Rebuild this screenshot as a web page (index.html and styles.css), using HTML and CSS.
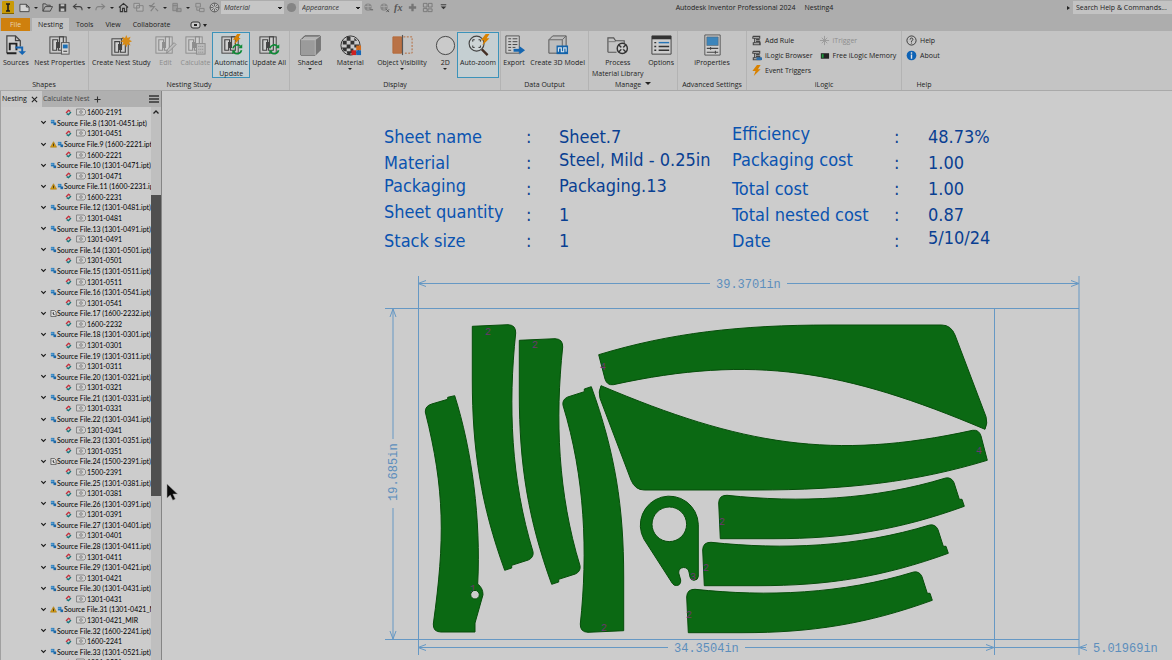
FILE: index.html
```html
<!doctype html>
<html lang="en">
<head>
    <meta charset="UTF-8">
    <meta name="viewport" content="width=device-width, initial-scale=1.0">
    <title>Autodesk Inventor Professional 2024 - Nesting4</title>
    <link rel="stylesheet" href="styles.css">
</head>
<body>
    <!-- Shared icon shapes -->
    <svg class="defs" aria-hidden="true">
        <symbol id="nest" viewBox="0 0 24 24">
            <rect x="2" y="3" width="17" height="17" fill="#c9c9c9" stroke="currentColor" stroke-width="1"/>
            <path d="M5 17V6h5v8h2V3h4v14h-5v-8H9v8z" fill="#d0d0d0" stroke="currentColor" stroke-width="1.2"/>
        </symbol>
        <symbol id="refresh" viewBox="0 0 12 12">
            <path d="M1.500 5A4.600 4.600 0 0 1 9.500 3M10.500 7A4.600 4.600 0 0 1 2.500 9" fill="none" stroke="#0c8a35" stroke-width="1.700"/>
            <path d="M11.200.8v4H7.200zM.8 11.200v-4h4z" fill="#0c8a35"/>
        </symbol>
        <symbol id="bolt" viewBox="0 0 10 12">
            <path d="M5.500 0h4L6.500 4.500h3L2 12l2-5.500H.5z" fill="#d98200"/>
        </symbol>
        <symbol id="scroll" viewBox="0 0 12 12">
            <path d="M2 1.500h7.500v2H4v5h6v2.200H2.500V8.500H4M2 1.500v2h2M5.500 5h4M5.500 7h4v3" fill="none" stroke="#444" stroke-width="1.200"/>
        </symbol>
        <symbol id="part" viewBox="0 0 8 8">
            <path d="M1 1h4v4H1z" fill="#2379bb"/><path d="M4 4h3v3H4z" fill="#1c67a6"/><path d="M1 2.500h3" stroke="#a9cbe5" stroke-width=".8"/>
        </symbol>
        <symbol id="sheetfile" viewBox="0 0 8 8">
            <path d="M1 .5h4l2 2v5H1z" fill="#ddd" stroke="#444" stroke-width=".8"/><path d="M2.500 3l3 3M4 2.500v3" stroke="#444"/>
        </symbol>
        <symbol id="warn" viewBox="0 0 8 8">
            <path d="M4 .8L7.500 7h-7z" fill="#d39b12" stroke="#a97500" stroke-width=".6"/><path d="M4 3v3" stroke="#222" stroke-width=".9"/>
        </symbol>
        <symbol id="link" viewBox="0 0 8 8">
            <path d="M1.200 4.500L4 1.500l2 1.200" fill="none" stroke="#c32f3c" stroke-width="1.600"/><path d="M6.800 3.500L4 6.500l-2-1.200" fill="none" stroke="#14757a" stroke-width="1.600"/>
        </symbol>
        <symbol id="shape" viewBox="0 0 10 8">
            <path d="M.5 1H8l1.500 1.500v3L8 7H.5z" fill="#d2d2d2" stroke="#777" stroke-width=".8"/><circle cx="5" cy="4" r="1.300" fill="none" stroke="#666" stroke-width=".7"/>
        </symbol>
        <symbol id="down" viewBox="0 0 8 8">
            <path d="M1.500 2.500L4 5l2.500-2.500" fill="none" stroke="#1c1c1c" stroke-width="1.400"/>
        </symbol>
    </svg>

    <header>
        <div class="titlebar">
            <svg class="app-logo" viewBox="0 0 12 13"><rect width="12" height="13" rx="1" fill="#c99a06"/><path d="M4 3h4M6 3v7M4 10h4" stroke="#1c1c1c" stroke-width="1.600"/><path d="M0 12.500h12" stroke="#806200"/></svg>
            <div class="quick">
                <button aria-label="New"><svg viewBox="0 0 12 12"><path d="M1 2.500h7l3 3v5H1zM8 2.500v3h3" fill="#d4d4d4" stroke="#444"/></svg></button>
                <span class="caret"></span>
                <button aria-label="Open"><svg viewBox="0 0 12 12"><path d="M1 10V2h3l1 1.500h4V5M1 10l2.500-5H11.500L9 10z" fill="none" stroke="#444"/></svg></button>
                <button aria-label="Save"><svg viewBox="0 0 12 12"><path d="M2 2h8v8.500H2z" fill="#444"/><path d="M4 2.500h4v2H4zM4 7h4v3H4z" fill="#c4c4c4"/></svg></button>
                <button aria-label="Undo"><svg viewBox="0 0 12 12"><path d="M5 2L1.500 5 5 8M2 5h6q3 0 3 4" fill="none" stroke="#444" stroke-width="1.200"/></svg></button>
                <span class="caret"></span>
                <button aria-label="Redo" class="off"><svg viewBox="0 0 12 12"><path d="M7 2l3.500 3L7 8M10 5H4q-3 0-3 4" fill="none" stroke="#777" stroke-width="1.200"/></svg></button>
                <span class="caret"></span>
                <button aria-label="Home"><svg viewBox="0 0 12 12"><path d="M1 6l5-4.500L11 6M2.500 5.500v5h2.500V7h2v3.500h2.500v-5" fill="none" stroke="#333" stroke-width="1.200"/></svg></button>
                <button aria-label="Team" class="off"><svg viewBox="0 0 12 12"><path d="M1 1.500h6v5H1zM4 4h7v6H4z" fill="#b8b8b8" stroke="#777"/></svg></button>
                <button aria-label="Select" class="off"><svg viewBox="0 0 12 12"><path d="M7 1L3 5h4L3 10M1 4h3M8 7l3 3" fill="none" stroke="#777" stroke-width="1.200"/></svg></button>
                <span class="caret"></span>
                <button aria-label="Update" class="off"><svg viewBox="0 0 12 12"><path d="M2 1.500h5v8H2zM2 4h5M6 7h5v3.500H6z" fill="#999" stroke="#777"/></svg></button>
                <span class="caret"></span>
                <button aria-label="Local update" class="off"><svg viewBox="0 0 12 12"><path d="M2 1.500h5v4H2zM6 7h5v3.500H6zM3 6v3h3" fill="none" stroke="#777"/></svg></button>
                <button aria-label="Appearance wheel"><svg viewBox="0 0 12 12"><circle cx="6" cy="6" r="4.800" fill="#bbb" stroke="#555"/><path d="M2.500 2.500l7 7M9.500 2.500l-7 7M6 1v10M1 6h10" stroke="#666"/><circle cx="6" cy="6" r="1.500" fill="#bbb"/></svg></button>
            </div>
            <select class="pick" aria-label="Material"><option>Material</option></select>
            <svg class="ball" viewBox="0 0 12 12"><circle cx="6" cy="6" r="5" fill="#858585"/></svg>
            <select class="pick" aria-label="Appearance"><option>Appearance</option></select>
            <div class="quick tail">
                <button aria-label="Adjust"><svg viewBox="0 0 12 12"><circle cx="5.500" cy="5.500" r="4" fill="#888"/><path d="M2 5h7M5.500 2v7" stroke="#aaa"/><path d="M8 8.500h3" stroke="#555"/></svg></button>
                <button aria-label="Clear"><svg viewBox="0 0 12 12"><circle cx="5.500" cy="5.500" r="4" fill="#888"/><path d="M2 5h7M5.500 2v7" stroke="#aaa"/><path d="M8 8l3 3M11 8l-3 3" stroke="#555"/></svg></button>
                <button class="fx">fx</button>
                <button aria-label="Add"><svg viewBox="0 0 12 12"><path d="M6 2v8M2 6h8" stroke="#757575" stroke-width="2.500"/></svg></button>
                <button aria-label="Grid"><svg viewBox="0 0 12 12"><path d="M1.500 1.500h4v4h-4zM7 1.500h4v4H7zM1.500 7h4v3.500h-4zM6.500 7.500H11v3H6.500z" fill="none" stroke="#777"/></svg></button>
                <button aria-label="Customize"><svg viewBox="0 0 12 12"><path d="M3 3h6" stroke="#333"/><path d="M3 5h6L6 8z" fill="#333"/></svg></button>
            </div>
            <div class="title"><span>Autodesk Inventor Professional 2024</span><span>Nesting4</span></div>
            <span class="caret side"></span>
            <input class="search" type="text" aria-label="Search" value="Search Help &amp; Commands...">
        </div>

        <nav>
            <a href="#" class="file">File</a>
            <a href="#" class="active">Nesting</a>
            <a href="#">Tools</a>
            <a href="#">View</a>
            <a href="#">Collaborate</a>
            <button class="pill" aria-label="Ribbon display"><svg viewBox="0 0 18 8"><rect x="1" y="1" width="9" height="6" rx="2" fill="#ccc" stroke="#333"/><path d="M4 4h3" stroke="#222" stroke-width="2"/><path d="M13 3h4l-2 3z" fill="#222"/></svg></button>
        </nav>

        <div class="ribbon">
            <section class="group shapes">
                <div class="tools">
                    <button class="tool"><svg viewBox="0 0 24 24"><path d="M3 20V2h9l5 5v6M12 2v5h5" fill="#cfcfcf" stroke="#444" stroke-width="1.300"/><path d="M3 20h10M6 17V10h7v7" fill="none" stroke="#222" stroke-width="2"/><path d="M12 14h7v6" fill="none" stroke="#1465b3" stroke-width="2"/><path d="M15 18h8l-4 4z" fill="#1465b3"/></svg><span>Sources</span></button>
                    <button class="tool"><svg viewBox="0 0 24 24"><use href="#nest"/><rect x="14" y="9" width="8" height="12" fill="#d5d5d5" stroke="#555"/><rect x="15.500" y="11" width="5" height="4" fill="#1c6fb5"/><path d="M16 18h4" stroke="#333"/></svg><span>Nest Properties</span></button>
                </div>
                <h2>Shapes</h2>
            </section>
            <section class="group study">
                <div class="tools">
                    <button class="tool"><svg viewBox="0 0 24 24"><g transform="translate(0 2)"><use href="#nest"/></g><path d="M17 1l1.300 3.200 3.200-1.400-1.400 3.200L23 7.500l-3 1.300 1.400 3.200-3.200-1.400L17 14l-1.300-3.400-3.200 1.400 1.400-3.200-3-1.300 3-1.500-1.400-3.200 3.200 1.400z" fill="#d68a16"/></svg><span>Create Nest Study</span></button>
                    <button class="tool" disabled><svg viewBox="0 0 24 24"><use href="#nest"/><path d="M13 20l1-4 7-7 2 2-7 7z" fill="#bbb" stroke="#8d8d8d"/></svg><span>Edit</span></button>
                    <button class="tool" disabled><svg viewBox="0 0 24 24"><use href="#nest"/><rect x="13" y="10" width="9" height="11" fill="#bbb" stroke="#8d8d8d"/><path d="M15 13h5M15 16h5M15 19h5" stroke="#8d8d8d" stroke-dasharray="1 1"/></svg><span>Calculate</span></button>
                    <button class="tool on"><svg viewBox="0 0 24 24"><use href="#nest"/><use href="#bolt" x="13" y="0" width="9" height="11"/><use href="#refresh" x="12" y="10" width="12" height="12"/></svg><span>Automatic Update</span></button>
                    <button class="tool"><svg viewBox="0 0 24 24"><use href="#nest"/><use href="#refresh" x="11" y="10" width="12" height="12"/></svg><span>Update All</span></button>
                </div>
                <h2>Nesting Study</h2>
            </section>
            <section class="group display">
                <div class="tools">
                    <button class="tool mid"><svg viewBox="0 0 24 24"><path d="M2 6l4-4h16v15l-5 5H2z" fill="#b5b5b5" stroke="#444"/><path d="M2 6h15v16H2z" fill="#9b9b9b"/><path d="M17 6l5-4v15l-5 5z" fill="#777"/><path d="M2 6h15M17 6v16M17 6l5-4" stroke="#c7c7c7" stroke-width=".7"/></svg><span>Shaded</span><i class="caret"></i></button>
                    <button class="tool mid"><svg viewBox="0 0 24 24"><circle cx="12" cy="12" r="10" fill="#c9c9c9" stroke="#333"/><path d="M8 2.500h4V7H8zM16 4l3 3h-3zM4 7h4v4H4zM12 7h4v4h-4zM8 11h4v4H8zM16 11h5v3h-5zM3 14h5v4H5zM12 15h3v5h-3zM8 18h4v4H9z" fill="#333"/><path d="M13 17h5v5h-5z" fill="#c22"/><path d="M18 12h5v5h-5z" fill="#d16b1c"/><path d="M18 17h5v5h-5z" fill="#1767b5"/></svg><span>Material</span><i class="caret"></i></button>
                    <button class="tool broad"><svg viewBox="0 0 24 24"><path d="M2 3h9v17H2z" fill="#b97246" stroke="#b56a3a"/><path d="M12 1v21" stroke="#555" stroke-width="1.200"/><path d="M13 3h9v17h-9" fill="none" stroke="#b56a3a" stroke-dasharray="2 1.500"/></svg><span>Object Visibility</span><i class="caret"></i></button>
                    <button class="tool slim"><svg viewBox="0 0 24 24"><circle cx="12" cy="12" r="9.500" fill="#cacaca" stroke="#444"/></svg><span>2D</span><i class="caret"></i></button>
                    <button class="tool on"><svg viewBox="0 0 24 24"><circle cx="10" cy="10" r="7.800" fill="#cdd4d6" stroke="#444" stroke-width="1.200"/><path d="M15.500 16l6 6" stroke="#442f25" stroke-width="2.500"/><path d="M6 8V6h2M12 6h2v2M6 12v2h2M12 14h2v-2" fill="none" stroke="#333"/><use href="#bolt" x="14" y="0" width="10" height="12"/></svg><span>Auto-zoom</span></button>
                </div>
                <h2>Display</h2>
            </section>
            <section class="group output">
                <div class="tools">
                    <button class="tool"><svg viewBox="0 0 24 24"><path d="M3 2h14v18H3z" fill="#ccc" stroke="#555"/><path d="M5.500 5h3M10 5h5M5.500 8h3M10 8h5M5.500 11h3M10 11h5M5.500 14h3M10 14h3M5.500 17h3" stroke="#444"/><path d="M11 17h7" stroke="#1666b0" stroke-width="3"/><path d="M17 12.500l6 4.500-6 4.500z" fill="#1666b0"/></svg><span>Export</span></button>
                    <button class="tool"><svg viewBox="0 0 24 24"><path d="M3 6l4-4h14v15l-4 3H3z" fill="#bdbdbd" stroke="#555"/><path d="M3 6h14v14M17 6l4-4" fill="none" stroke="#666"/><rect x="11" y="12" width="12" height="9" fill="#1363aa"/><path d="M13 18.500v-4h3v4h2.500v-4H21v4" fill="none" stroke="#d8e4ee" stroke-width="1.200"/></svg><span>Create 3D Model</span></button>
                </div>
                <h2>Data Output</h2>
            </section>
            <section class="group manage">
                <div class="tools">
                    <button class="tool"><svg viewBox="0 0 24 24"><path d="M2 19V4h6l2 3h9v4M2 19h9" fill="none" stroke="#555" stroke-width="1.200"/><path d="M2 8h8" stroke="#777"/><circle cx="17" cy="15" r="5.300" fill="#ccc" stroke="#333" stroke-width="1.500"/><path d="M13 11l8 8M21 11l-8 8" stroke="#333" stroke-width="1.500"/><circle cx="17" cy="15" r="1.500" fill="#ccc"/></svg><span>Process<br>Material Library</span></button>
                    <button class="tool"><svg viewBox="0 0 24 24"><path d="M2 2h20v19H2z" fill="#cdcdcd" stroke="#444"/><path d="M2 2h20v3.500H2z" fill="#333"/><path d="M9 9h11" stroke="#2674b5" stroke-width="1.500"/><path d="M4.500 9h2M4.500 13h2M4.500 17h2M9 13h11M9 17h11" stroke="#333" stroke-width="1.500"/></svg><span>Options</span></button>
                </div>
                <h2>Manage <i class="caret"></i></h2>
            </section>
            <section class="group settings">
                <div class="tools">
                    <button class="tool"><svg viewBox="0 0 24 24"><path d="M4 1h16v21H4z" fill="#cfcfcf" stroke="#555"/><path d="M6 3h12v9H6z" fill="#3c85bb" stroke="#555" stroke-width=".5"/><path d="M6 15h12M6 19h12M10 13.500v3M15 17.500v3" stroke="#444" stroke-width="1.100"/></svg><span>iProperties</span></button>
                </div>
                <h2>Advanced Settings</h2>
            </section>
            <section class="group ilogic">
                <div class="rows">
                    <button><svg viewBox="0 0 12 12"><use href="#scroll"/></svg>Add Rule</button>
                    <button disabled><svg viewBox="0 0 12 12"><path d="M6 1v10M1 6h10M3 3l6 6M9 3L3 9" stroke="#999"/></svg>iTrigger</button>
                    <button><svg viewBox="0 0 12 12"><use href="#scroll"/><path d="M6 8h6v3H6z" fill="#2d6ea8"/></svg>iLogic Browser</button>
                    <button><svg viewBox="0 0 12 12"><path d="M2 3.500h9v6H2z" fill="#222"/><path d="M3 4.500h2v4H3z" fill="#1c9a3c"/></svg>Free iLogic Memory</button>
                    <button><svg viewBox="0 0 12 12"><use href="#bolt" x="1" width="10" height="12"/></svg>Event Triggers</button>
                </div>
                <h2>iLogic</h2>
            </section>
            <section class="group help">
                <div class="rows">
                    <button><svg viewBox="0 0 12 12"><circle cx="6" cy="6" r="5" fill="none" stroke="#333"/><path d="M4.500 5q0-1.700 1.500-1.700T7.500 5Q7.500 5.800 6 6.500v1M6 8.300v1" fill="none" stroke="#333"/></svg>Help</button>
                    <button><svg viewBox="0 0 12 12"><circle cx="6" cy="6" r="5.300" fill="#0d62b5"/><path d="M6 5v4.500M6 2.500v1.500" stroke="#e4e4e4" stroke-width="1.500"/></svg>About</button>
                </div>
                <h2>Help</h2>
            </section>
        </div>
    </header>

    <main>
        <aside>
            <div class="panel-tabs">
                <a href="#" class="current">Nesting <svg viewBox="0 0 8 8"><path d="M1 1l6 6M7 1L1 7" stroke="#222" stroke-width="1.200"/></svg></a>
                <a href="#">Calculate Nest</a>
                <button aria-label="Add tab"><svg viewBox="0 0 8 8"><path d="M4 .5v7M.5 4h7" stroke="#333" stroke-width="1.200"/></svg></button>
                <button class="menu" aria-label="Panel menu"><svg viewBox="0 0 10 8"><path d="M0 1h10M0 4h10M0 7h10" stroke="#333" stroke-width="1.300"/></svg></button>
            </div>
            <div class="browser">
                <ul id="tree"></ul>
                <div class="scrollbar">
                    <svg viewBox="0 0 10 10"><path d="M2.500 6.500L5 4l2.500 2.500" fill="none" stroke="#222" stroke-width="1.300"/></svg>
                    <div class="thumb"></div>
                </div>
            </div>
        </aside>

        <div class="canvas">
            <div class="info">
                <dl>
                    <dt>Sheet name</dt><dd>:</dd><dd>Sheet.7</dd>
                    <dt>Material</dt><dd>:</dd><dd class="tailed">Steel, Mild - 0.25in</dd>
                    <dt class="tailed">Packaging</dt><dd>:</dd><dd class="tailed">Packaging.13</dd>
                    <dt class="tailed">Sheet quantity</dt><dd>:</dd><dd>1</dd>
                    <dt>Stack size</dt><dd>:</dd><dd>1</dd>
                </dl>
                <dl class="costs">
                    <dt class="tailed">Efficiency</dt><dd>:</dd><dd>48.73%</dd>
                    <dt class="tailed">Packaging cost</dt><dd>:</dd><dd>1.00</dd>
                    <dt>Total cost</dt><dd>:</dd><dd>1.00</dd>
                    <dt>Total nested cost</dt><dd>:</dd><dd>0.87</dd>
                    <dt>Date</dt><dd>:</dd><dd class="tailed">5/10/24</dd>
                </dl>
            </div>

            <svg class="drawing" viewBox="384 270 788 390">
                <defs>
                    <path id="bracket" d="M472.300 326.300L508 324.700Q516 325 515.700 333C508 405 511 480 533 551.700Q534 557.500 528.300 560L511.700 565.300V568L504.700 570.300C481 505 472.300 450 472.300 380z"/>
                    <path id="fender" d="M598.700 354.700C670 333 740 325 830 325H941.700Q951 325 955 335L986 416.700Q988 423 985 429.300C845 370 753 354 613.300 384.700Q607 385.500 605 379z"/>
                    <path id="arrow" d="M0 0l8-3M0 0l8 3"/>
                </defs>
                <!-- Sheet outline and dimensions -->
                <g class="lines">
                    <path d="M385 308.500H1079M385 639.500H1079M418.500 276V655M994.500 308.500V655M1079 276V655"/>
                    <path d="M418 283.500H710M787 283.500H1079M393 309V439M393 508V639M418 647.500H668M745 647.500H1086"/>
                    <use href="#arrow" transform="translate(418 283.500)"/>
                    <use href="#arrow" transform="translate(1079 283.500) rotate(180)"/>
                    <use href="#arrow" transform="translate(393 309) rotate(90)"/>
                    <use href="#arrow" transform="translate(393 639) rotate(-90)"/>
                    <use href="#arrow" transform="translate(418 647.500)"/>
                    <use href="#arrow" transform="translate(994 647.500) rotate(180)"/>
                    <use href="#arrow" transform="translate(1079 647.500)"/>
                </g>
                <g class="dims">
                    <text x="716" y="288">39.3701in</text>
                    <text x="674" y="652">34.3504in</text>
                    <text x="1093" y="652">5.01969in</text>
                    <text transform="translate(397 501) rotate(-90)">19.685in</text>
                </g>
                <!-- Nested parts -->
                <g class="parts">
                    <path d="M425.300 412Q425 406 431.700 404L447.700 399.300V397.300L454.700 395.700C472 450 481 520 477.700 584Q483 588 483 594.700L475 623V632H441Q433 632 433.300 624C445 540 445 490 425.300 412z"/>
                    <use href="#bracket"/>
                    <use href="#bracket" transform="translate(47 14)"/>
                    <use href="#bracket" transform="translate(1096 957) rotate(180)"/>
                    <use href="#bracket" transform="translate(394 1011) rotate(-90)"/>
                    <use href="#bracket" transform="translate(378 1058) rotate(-90)"/>
                    <use href="#bracket" transform="translate(362 1105) rotate(-90)"/>
                    <use href="#fender"/>
                    <use href="#fender" transform="translate(1586 815) rotate(180)"/>
                    <path fill-rule="evenodd" d="M698.300 524.300V576.500Q698 580 694 580.300Q691 580.500 690 577L689 572Q688 567.500 683.500 567.500Q678.500 568 678.700 573L680.700 580Q681 585 676.700 585.500Q674 586 672.300 583.300L644 539.300A29 29 0 1 1 698.300 524.300zM686.600 524.300A17.300 17.300 0 1 0 652 524.300A17.300 17.300 0 1 0 686.600 524.300z"/>
                </g>
                <g class="marks">
                    <text x="485" y="335">2</text>
                    <text x="532" y="348">2</text>
                    <text x="601" y="631">2</text>
                    <text x="600" y="370">4</text>
                    <text x="976" y="454">4</text>
                    <text x="470" y="592">1</text>
                    <text x="719" y="525">2</text>
                    <text x="703" y="571">2</text>
                    <text x="686" y="618">2</text>
                    <text x="690" y="580">3</text>
                </g>
                <circle class="hole" cx="475" cy="594.700" r="4.300"/>
            </svg>
        </div>
    </main>

    <svg class="pointer" viewBox="0 0 12 18"><path d="M1 1v14l3.300-3 2.500 5.200 2.500-1.200-2.400-5H11.500z" fill="#0a0a0a" stroke="#999" stroke-width=".5"/></svg>

    <script>
        // number, part, marker in front of the name
        var sources = [
            [8, '1301-0451'], [9, '1600-2221', 'warn'], [10, '1301-0471'], [11, '1600-2231', 'warn'],
            [12, '1301-0481'], [13, '1301-0491'], [14, '1301-0501'], [15, '1301-0511'],
            [16, '1301-0541'], [17, '1600-2232', 'sheetfile'], [18, '1301-0301'], [19, '1301-0311'],
            [20, '1301-0321'], [21, '1301-0331'], [22, '1301-0341'], [23, '1301-0351'],
            [24, '1500-2391', 'sheetfile'], [25, '1301-0381'], [26, '1301-0391'], [27, '1301-0401'],
            [28, '1301-0411'], [29, '1301-0421'], [30, '1301-0431'], [31, '1301-0421_MIR', 'warn'],
            [32, '1600-2241'], [33, '1301-0521']
        ];

        function icon(name) {
            return '<svg class="' + name + '"><use href="#' + name + '"/></svg>';
        }

        function shapeRow(part) {
            return '<li class="leaf">' + icon('link') + icon('shape') + part + '</li>';
        }

        var html = shapeRow('1600-2191');
        sources.forEach(function(s) {
            var marks = s[2] === 'warn' ? icon('warn') + icon('part') : icon(s[2] || 'part');
            html += '<li>' + icon('down') + marks + 'Source File.' + s[0] + ' (' + s[1] + '.ipt)</li>';
            html += shapeRow(s[1]);
        });
        document.getElementById('tree').innerHTML = html;
    </script>
</body>
</html>
```

FILE: styles.css
```css
* {
    margin: 0;
    padding: 0;
    box-sizing: border-box;
}

body {
    font-family: "Open Sans", "Noto Sans", sans-serif;
    font-size: 7px;
    line-height: 11px;
    color: #1c1c1c;
    background-color: #cccccc;
    height: 100vh;
    display: flex;
    flex-direction: column;
    overflow: hidden;
}

button {
    font: inherit;
    color: inherit;
    background: none;
    border: none;
}

a {
    color: inherit;
    text-decoration: none;
}

svg {
    display: block;
    flex: none;
}

.defs {
    width: 0;
    height: 0;
    position: absolute;
}

.caret {
    display: inline-block;
    border: 2px solid transparent;
    border-top-color: #222;
    border-bottom: none;
}

.caret.side {
    border: 2px solid transparent;
    border-left: 3px solid #222;
    border-right: none;
}

/* Title bar */
header {
    flex: none;
    background-color: #adadad;
}

.titlebar {
    display: flex;
    align-items: center;
    height: 15px;
    padding-left: 2px;
}

.app-logo {
    width: 12px;
    height: 13px;
    margin-right: 5px;
}

.quick {
    display: flex;
    align-items: center;
    flex: none;
    width: 201px;
    justify-content: space-between;
    margin-right: 1px;
}

.quick svg {
    width: 11px;
    height: 11px;
}

.off {
    opacity: 0.8;
}

.pick {
    appearance: none;
    width: 63px;
    height: 13px;
    border: none;
    border-radius: 0;
    padding-left: 3px;
    font: italic 7px/13px "Open Sans", "Noto Sans", sans-serif;
    color: #333;
    background: linear-gradient(#222, #222) no-repeat 57px 6px / 4px 1px, linear-gradient(#222, #222) no-repeat 58px 7px / 2px 1px, #c6c6c6;
}

.ball {
    width: 11px;
    height: 11px;
    margin: 0 2px;
}

.quick.tail {
    width: 86px;
    margin-left: 1px;
}

.fx {
    font: italic bold 10px/11px "Liberation Serif", serif;
    color: #555;
}

.title {
    flex: 1;
    display: flex;
    justify-content: center;
    gap: 9px;
    padding-right: 8px;
}

.search {
    width: 99px;
    height: 13px;
    margin-left: 3px;
    padding-left: 3px;
    border: none;
    font: inherit;
    color: #222;
    background-color: #c3c3c3;
}

/* Ribbon tabs */
nav {
    display: flex;
    align-items: center;
    height: 16px;
    padding: 3px 0 0 1px;
}

nav a {
    padding: 0 6px;
    line-height: 13px;
}

nav .file {
    padding: 0 9px;
    margin-right: 2px;
    color: #e8d3b5;
    background-color: #cf800d;
}

nav .active {
    margin-right: 1px;
    background-color: #c4c4c4;
}

.pill {
    margin-left: 14px;
}

.pill svg {
    width: 18px;
    height: 8px;
}

/* Ribbon */
.ribbon {
    display: flex;
    height: 60px;
    background-color: #c4c4c4;
    border-bottom: 1px solid #a9a9a9;
}

.group {
    flex: none;
    display: flex;
    flex-direction: column;
    justify-content: space-between;
    border-right: 1px solid #b3b3b3;
}

.group h2 {
    font-size: 7px;
    font-weight: normal;
    text-align: center;
    line-height: 11px;
}

.group h2 .caret {
    margin: 0 0 2px 2px;
    border-width: 3px;
    border-bottom: none;
}

.shapes { width: 89px; }
.study { width: 201px; }
.display { width: 211px; }
.output { width: 88px; }
.manage { width: 89px; }
.settings { width: 69px; }
.ilogic { width: 155px; }
.help { width: 44px; border-right: none; }

.tools {
    display: flex;
    justify-content: space-between;
    height: 46px;
    margin-top: 1px;
    padding: 0 2px;
}

.display .tools {
    padding: 0 1px 0 0;
}

.output .tools {
    padding: 0 2px 0 0;
}

.settings .tools {
    justify-content: center;
}

.tool {
    display: flex;
    flex-direction: column;
    align-items: center;
    min-width: 26px;
    padding-top: 1px;
    border: 1px solid transparent;
}

.tool svg {
    width: 23px;
    height: 23px;
    color: #444;
}

.tool:disabled,
.rows button:disabled {
    color: #8d8d8d;
}

.tool:disabled svg {
    color: #8d8d8d;
}

.study .tool span {
    max-width: 60px;
}

.study .tool.on {
    width: 38px;
}

.tool.on {
    background-color: #c5cfd2;
    border-color: #3b93ba;
}

.display .tool.on {
    min-width: 42px;
}

.tool.mid {
    min-width: 40px;
}

.tool.broad {
    min-width: 63px;
}

.tool.slim {
    min-width: 23px;
    padding-left: 0;
    padding-right: 0;
    border-width: 1px 0;
}

.rows {
    display: grid;
    grid-template-columns: auto auto;
    grid-auto-rows: 15px;
    justify-content: start;
    column-gap: 6px;
    padding: 2px 0 0 4px;
}

.rows button {
    display: flex;
    align-items: center;
    gap: 3px;
    white-space: nowrap;
}

.rows svg {
    width: 11px;
    height: 11px;
}

.help .rows {
    grid-template-columns: auto;
}

/* Browser panel */
main {
    flex: 1;
    min-height: 0;
    display: flex;
}

aside {
    flex: none;
    width: 162px;
    display: flex;
    flex-direction: column;
    border-left: 1px solid #a0a0a0;
    border-right: 1px solid #858585;
}

.panel-tabs {
    flex: none;
    display: flex;
    align-items: center;
    height: 16px;
    background-color: #b0b0b0;
    color: #444;
}

.panel-tabs a {
    display: flex;
    align-items: center;
    gap: 4px;
    padding-right: 4px;
    line-height: 16px;
}

.panel-tabs .current {
    padding: 0 4px 0 1px;
    margin-right: 1px;
    color: #111;
    background-color: #c9c9c9;
}

.panel-tabs svg {
    width: 7px;
    height: 7px;
}

.panel-tabs .menu {
    margin: 0 2px 0 auto;
}

.panel-tabs .menu svg {
    width: 10px;
    height: 8px;
}

.browser {
    flex: 1;
    min-height: 0;
    display: flex;
    overflow: hidden;
}

#tree {
    flex: 1;
    height: calc(100% + 8px);
    display: flex;
    flex-direction: column;
    list-style: none;
    overflow: hidden;
    font-family: Lato, "Liberation Sans", sans-serif;
    color: #000;
    line-height: 10px;
}

#tree li {
    flex: 1;
    display: flex;
    align-items: center;
    padding-left: 39px;
    white-space: nowrap;
}

#tree .leaf {
    padding-left: 64px;
}

#tree svg {
    width: 7px;
    height: 7px;
}

#tree .down {
    margin-right: 3px;
}

#tree .link {
    margin-right: 4px;
}

#tree .shape {
    width: 10px;
    height: 8px;
    margin-right: 1px;
}

.scrollbar {
    width: 10px;
    background-color: #bfbfbf;
}

.scrollbar svg {
    width: 10px;
    height: 10px;
}

.thumb {
    height: 54.5%;
    margin-top: 78px;
    background-color: #4f4f4f;
}

/* Nest drawing */
.canvas {
    flex: 1;
    min-width: 0;
    overflow: hidden;
    padding: 29px 0 0 222px;
}

.info {
    display: flex;
    align-items: flex-start;
    gap: 20px;
    height: 150px;
    padding-top: 4px;
    font-family: "DejaVu Sans Condensed", "Noto Sans", sans-serif;
    font-size: 18px;
    line-height: 26px;
    color: #0a53b0;
}

dl {
    display: grid;
    grid-template-columns: 142px 33px 153px;
    grid-auto-rows: 26px;
    align-items: end;
    white-space: nowrap;
}

.costs {
    grid-template-columns: 162px 34px 80px;
}

dd {
    color: #093f92;
}

.tailed {
    padding-bottom: 3px;
}

.drawing {
    width: 100%;
    height: auto;
}

.lines {
    fill: none;
    stroke: #6698c4;
}

.dims {
    font-family: "Liberation Mono", monospace;
    font-size: 12px;
    fill: #5c8ebc;
}

.parts {
    fill: #0b6913;
    stroke: #064d0a;
}

.hole {
    fill: #cccccc;
    stroke: #064d0a;
}

.marks {
    font-family: "Liberation Mono", monospace;
    font-size: 10px;
    fill: #6d3570;
}

.pointer {
    position: absolute;
    left: 166px;
    top: 483px;
    width: 12px;
    height: 18px;
}
```
